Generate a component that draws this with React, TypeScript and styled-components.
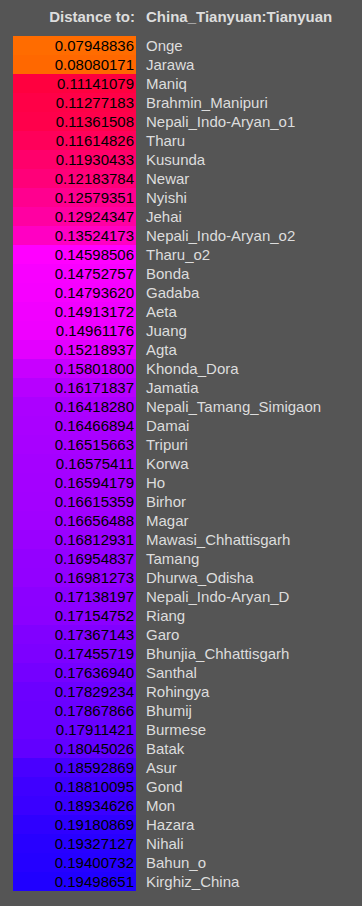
import React from "react";
import styled, { createGlobalStyle } from "styled-components";

const rows: [string, number][] = [
  ["Onge", 0.07948836],
  ["Jarawa", 0.08080171],
  ["Maniq", 0.11141079],
  ["Brahmin_Manipuri", 0.11277183],
  ["Nepali_Indo-Aryan_o1", 0.11361508],
  ["Tharu", 0.11614826],
  ["Kusunda", 0.11930433],
  ["Newar", 0.12183784],
  ["Nyishi", 0.12579351],
  ["Jehai", 0.12924347],
  ["Nepali_Indo-Aryan_o2", 0.13524173],
  ["Tharu_o2", 0.14598506],
  ["Bonda", 0.14752757],
  ["Gadaba", 0.1479362],
  ["Aeta", 0.14913172],
  ["Juang", 0.14961176],
  ["Agta", 0.15218937],
  ["Khonda_Dora", 0.158018],
  ["Jamatia", 0.16171837],
  ["Nepali_Tamang_Simigaon", 0.1641828],
  ["Damai", 0.16466894],
  ["Tripuri", 0.16515663],
  ["Korwa", 0.16575411],
  ["Ho", 0.16594179],
  ["Birhor", 0.16615359],
  ["Magar", 0.16656488],
  ["Mawasi_Chhattisgarh", 0.16812931],
  ["Tamang", 0.16954837],
  ["Dhurwa_Odisha", 0.16981273],
  ["Nepali_Indo-Aryan_D", 0.17138197],
  ["Riang", 0.17154752],
  ["Garo", 0.17367143],
  ["Bhunjia_Chhattisgarh", 0.17455719],
  ["Santhal", 0.1763694],
  ["Rohingya", 0.17829234],
  ["Bhumij", 0.17867866],
  ["Burmese", 0.17911421],
  ["Batak", 0.18045026],
  ["Asur", 0.18592869],
  ["Gond", 0.18810095],
  ["Mon", 0.18934626],
  ["Hazara", 0.19180869],
  ["Nihali", 0.19327127],
  ["Bahun_o", 0.19400732],
  ["Kirghiz_China", 0.19498651],
];

// distance -> cell colour, orange -> red -> magenta -> blue
const colorFor = (v: number) => {
  if (v < 0.1) {
    const g = Math.round(106 + (0.08 - v) * 3000);
    return `rgb(255,${Math.min(g, 112)},0)`;
  }
  if (v < 0.146) {
    const b = Math.round(((v - 0.1) / 0.046) * 255);
    return `rgb(255,0,${Math.min(255, Math.max(0, b))})`;
  }
  const r = Math.round(255 - (v - 0.146) * 4550);
  return `rgb(${Math.max(0, r)},0,255)`;
};

const GlobalStyle = createGlobalStyle`
  html, body {
    margin: 0;
    background: #555555;
  }
`;

const Page = styled.div`
  min-height: 906px;
  padding: 7px 0 0 13px;
  font-family: "Liberation Sans", Arial, sans-serif;
  font-size: 15px;
  color: #dddddd;
`;

const Row = styled.div`
  display: grid;
  grid-template-columns: 123px auto;
  height: 19px;
  line-height: 19px;
`;

const HeaderRow = styled(Row)`
  font-weight: bold;
  margin-bottom: 10px;
`;

const Value = styled.div`
  text-align: right;
  padding-right: 2px;
  color: #000;
`;

const HeadLabel = styled.div`
  text-align: right;
  padding-right: 1px;
`;

const Name = styled.div`
  padding-left: 10px;
  white-space: nowrap;
`;

const App: React.FC = () => {
  return (
    <>
      <GlobalStyle />
      <Page>
        <HeaderRow>
          <HeadLabel>Distance to:</HeadLabel>
          <Name>China_Tianyuan:Tianyuan</Name>
        </HeaderRow>
        {rows.map(([name, v]) => (
          <Row key={name}>
            <Value style={{ background: colorFor(v) }}>{v.toFixed(8)}</Value>
            <Name>{name}</Name>
          </Row>
        ))}
      </Page>
    </>
  );
};

export default App;
